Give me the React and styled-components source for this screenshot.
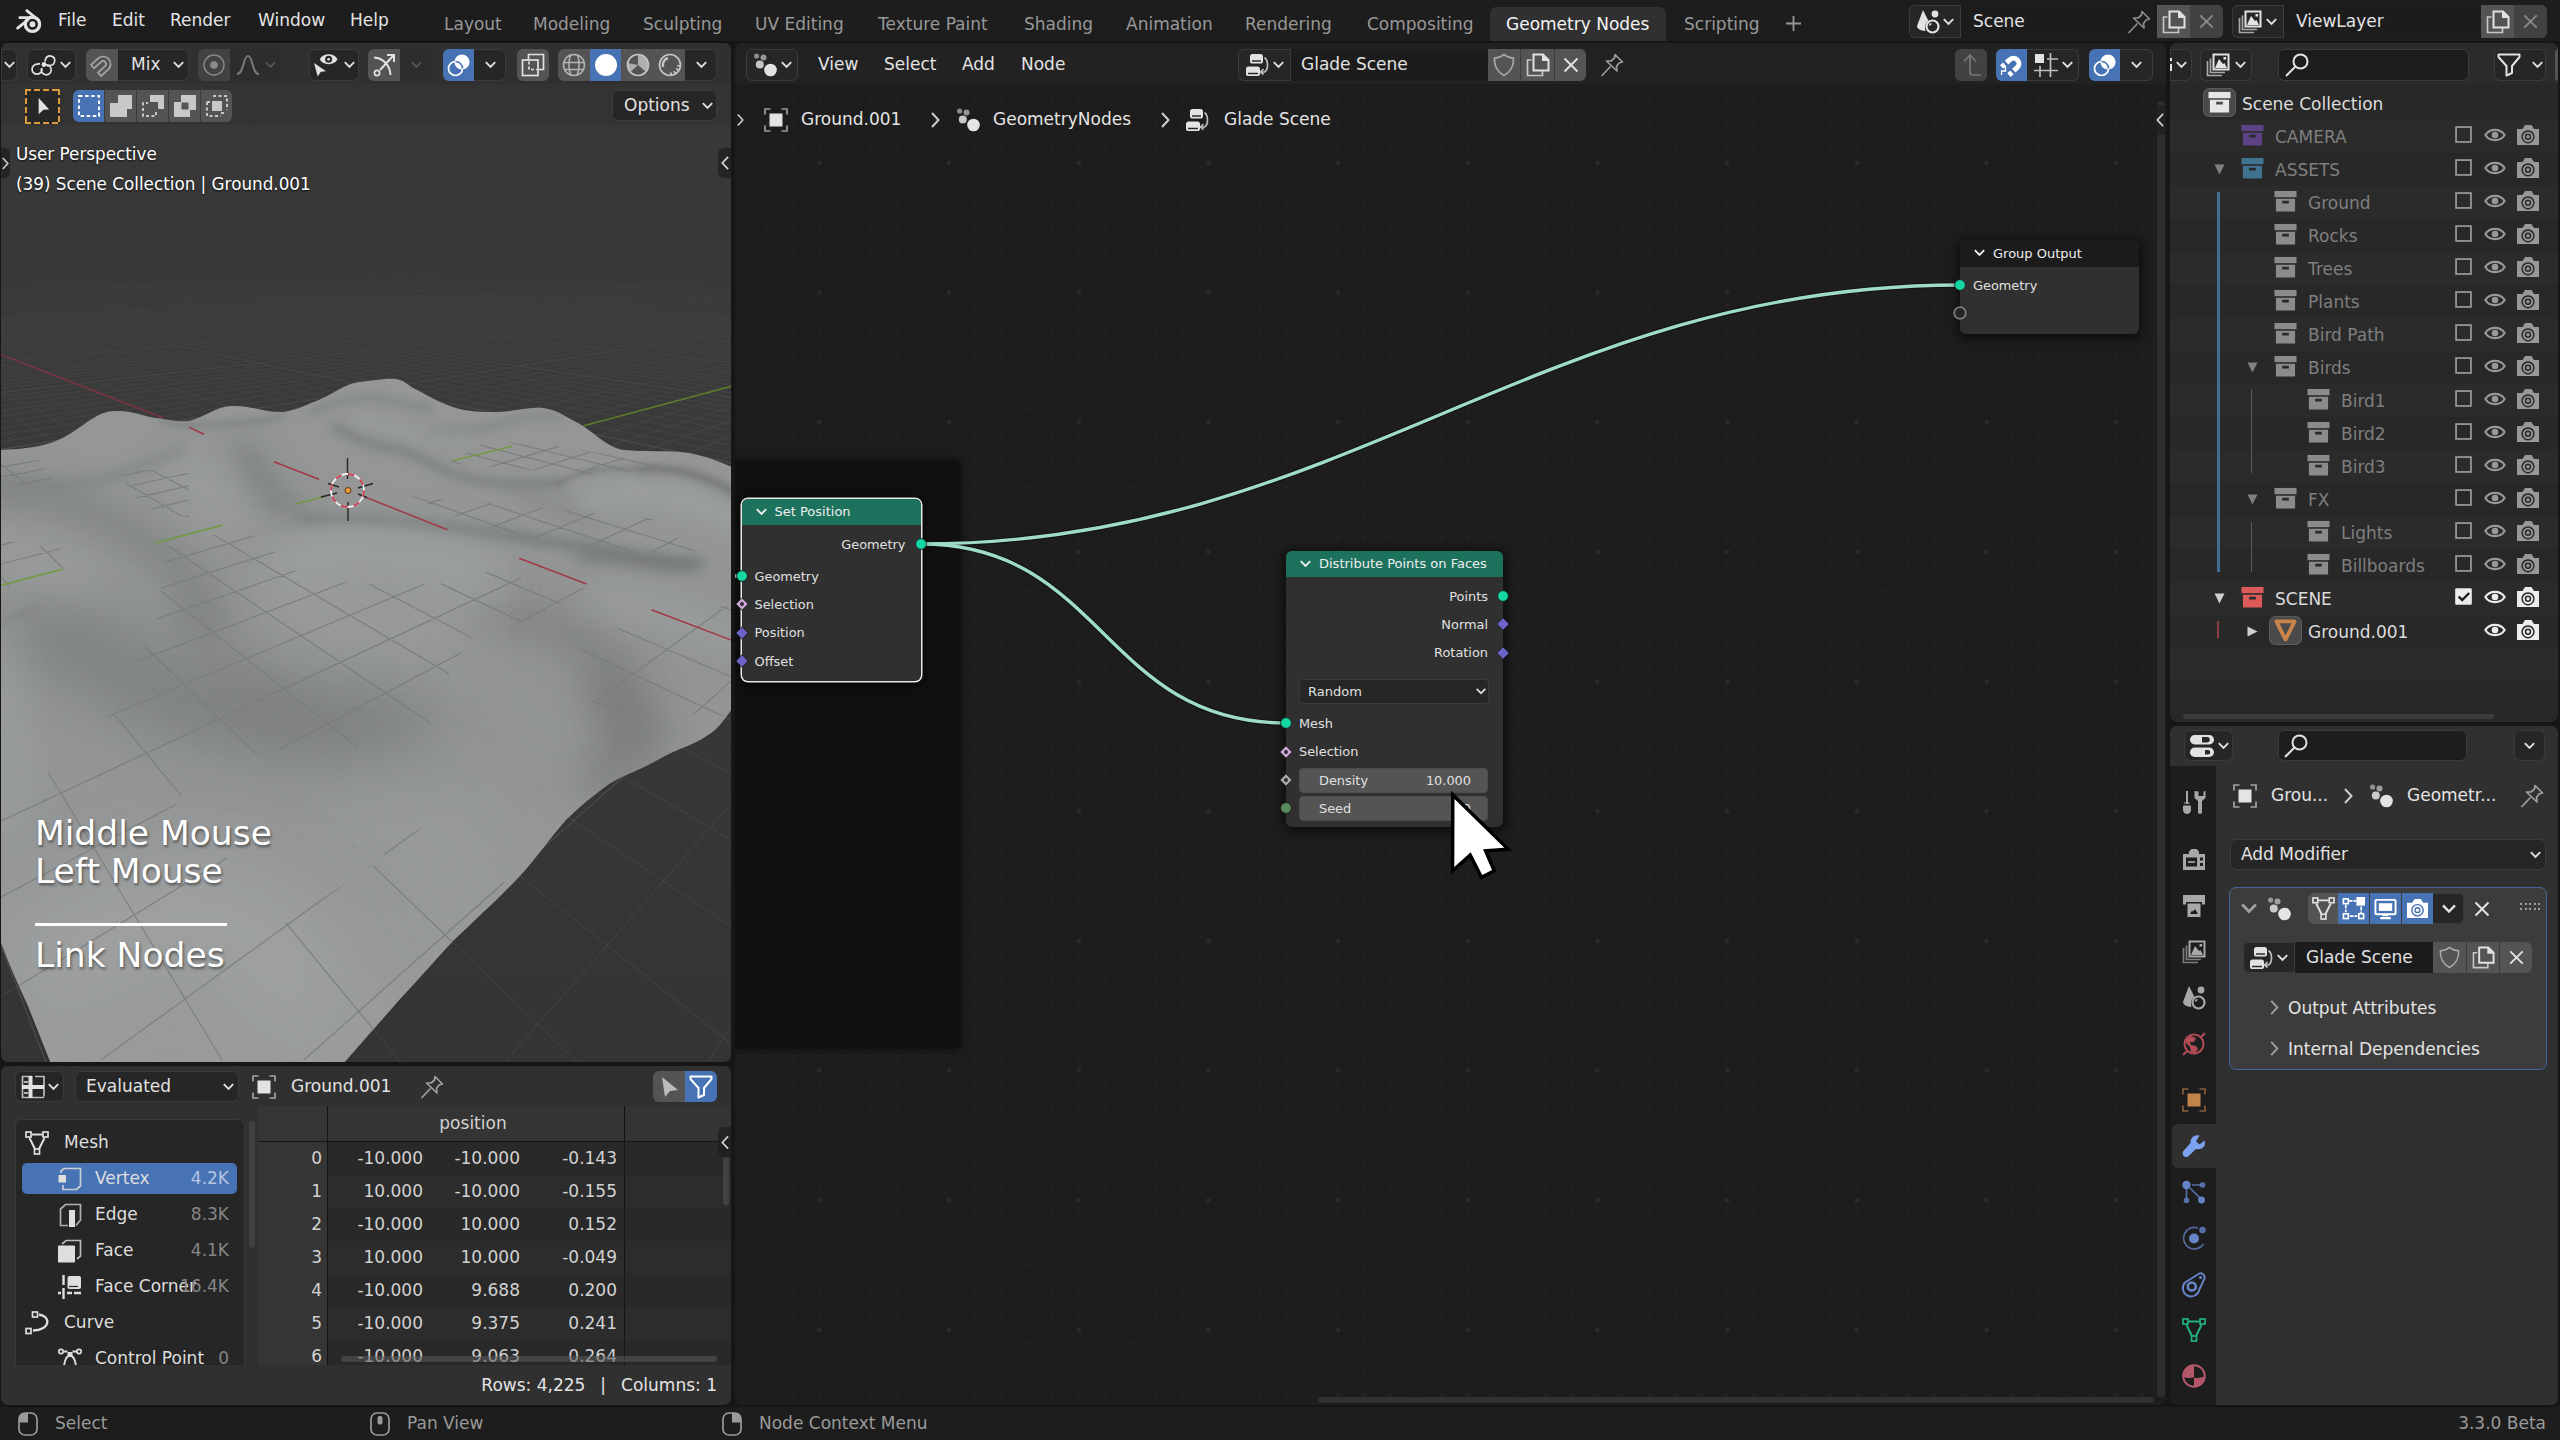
import React from "react";
import styled, { createGlobalStyle, css } from "styled-components";

const Global = createGlobalStyle`
  html, body { margin: 0; padding: 0; background: #161616; overflow: hidden; }
  * { box-sizing: border-box; }
  body { font-family: "DejaVu Sans", sans-serif; font-size: 17px; color: #e4e4e4; }
`;

/* ---------- icons ---------- */
const S = { fill: "none", stroke: "currentColor", strokeWidth: 1.7 };
const F = { fill: "currentColor" };
const sq = (x, y, s = 5) => <rect x={x} y={y} width={s} height={s} {...S} />;

const ICONS = {
  logo: (
    <g>
      <circle cx="15.2" cy="15" r="6.6" {...S} strokeWidth="3" />
      <circle cx="15.2" cy="15" r="2.7" {...F} />
      <path d="M1.5 18.5 L11 11 M3.5 8.8 H15 M10 2.5 L21 11.5" {...S} strokeWidth="2.6" strokeLinecap="round" />
    </g>
  ),
  link: (
    <g>
      <path d="M10.6 13.4a5 5 0 1 1-1 1.6M10 15.5A5 5 0 1 1 5.4 11.2L8 10.6" {...S} />
      <path d="M13 8.5 13.6 6A4.7 4.7 0 1 1 18 12.4L15 13" {...S} />
      <circle cx="12" cy="11.5" r="2.4" {...F} />
    </g>
  ),
  magnet: (
    <g transform="rotate(48 12 12)">
      <path d="M4.5 20V10.5a7.5 7.5 0 0 1 15 0V20h-4.6V10.5a2.9 2.9 0 0 0-5.8 0V20z" {...S} />
    </g>
  ),
  magnetOn: (
    <g>
      <path transform="rotate(48 12 12)" d="M6.6 14.5V10a5.4 5.4 0 0 1 10.8 0V14.5M6.6 17v4M17.4 17v4" {...S} strokeWidth="5" />
      <path d="M1.5 22v-4h4v-4" {...S} strokeWidth="1.3" />
    </g>
  ),
  prop: (
    <g>
      <circle cx="12" cy="12" r="10" {...S} strokeWidth="1.4" />
      <circle cx="12" cy="12" r="3.8" {...F} />
    </g>
  ),
  curve: <path d="M1 21C8 21 7 3 12 3s4 18 11 18" {...S} strokeWidth="2" />,
  vis: (
    <g>
      <path d="M6.5 6C9.5-.3 20.500-.3 23.500 6 20.500 12.300 9.500 12.300 6.500 6z" {...F} />
      <circle cx="15" cy="6" r="3.4" fill="#282828" />
      <circle cx="15" cy="6" r="1.3" {...F} />
      <path d="M1 9.500 12.500 17.500 7.500 18 4.500 22.500z" {...F} />
    </g>
  ),
  gizmo: (
    <g>
      <path d="M2 4.500C11 5 18 12 18.500 22M8 17 21 3M15 2h7v7" {...S} strokeWidth="2" />
      <circle cx="5" cy="20" r="2.6" {...S} />
    </g>
  ),
  overlay: (
    <g>
      <circle cx="15" cy="9" r="7.600" {...F} />
      <circle cx="8.500" cy="15.500" r="7" {...S} />
      <path d="M8.500 8.500a7 7 0 0 1 7 7" fill="none" stroke="#4772b3" strokeWidth="1.600" />
    </g>
  ),
  xray: (
    <g>
      <path d="M7.500 7V1.500h15v15H17" {...S} />
      <rect x="1.500" y="7" width="15.500" height="15.500" {...S} />
      <path d="M8 8.500v8h8" {...S} strokeDasharray="3 2" />
    </g>
  ),
  wire: (
    <g {...S} strokeWidth="1.500">
      <circle cx="12" cy="12" r="10.500" />
      <path d="M1.500 9.500h21M2.500 16.500h19M8.500 2C6.500 8 6.500 16 9 22.500M15.500 2C17.500 8 17.500 16 15 22.500" />
    </g>
  ),
  solid: <circle cx="12" cy="12" r="11" {...F} />,
  matprev: (
    <g>
      <circle cx="12" cy="12" r="10.500" {...S} />
      <path d="M12 1.500V12L20 19A10.500 10.500 0 0 0 12 1.500zM12 12 1.500 10a10.500 10.500 0 0 0 3 9z" {...F} opacity=".8" />
    </g>
  ),
  rendered: (
    <g>
      <circle cx="12" cy="12" r="10.500" {...S} />
      <path d="M5 14a7.500 7.500 0 0 1 5-9" {...S} strokeWidth="2.500" />
      <path d="M12 21a9 9 0 0 0 8.500-9" {...S} strokeWidth="3" strokeDasharray="2 2" />
    </g>
  ),
  arrow: <path d="M5 2 21 15 13 16 8 22z" {...F} />,
  selTool: <path d="M8 3 19 15 13 15.500 8 20z" {...F} />,
  selNew: <rect x="2" y="2" width="20" height="20" {...S} strokeWidth="2" strokeDasharray="3.500 2.600" />,
  selAdd: <path d="M9 1h14v14h-5v8H1V9h8z" {...F} />,
  selSub: (
    <g>
      <path d="M9 1h14v14h-6V8H9z" {...F} />
      <path d="M15 18v4H2V9h5" {...S} strokeWidth="2" strokeDasharray="3 2.500" />
    </g>
  ),
  selInv: <path fillRule="evenodd" d="M8 1h15v15h-6v7H1V8h7zM8.500 8.500v7h7v-7z" {...F} />,
  selInt: (
    <g>
      <rect x="7" y="7" width="10" height="10" {...F} />
      <path d="M8 2h14v14M2 8v14h14M2 8h3M19 19h-3" {...S} strokeWidth="2" strokeDasharray="3 2.500" />
    </g>
  ),
  geo: (
    <g>
      <circle cx="3.600" cy="3" r="2.600" {...F} opacity=".55" />
      <circle cx="10.500" cy="4.600" r="3" {...F} opacity=".6" />
      <circle cx="6.800" cy="11.500" r="4" {...F} opacity=".85" />
      <circle cx="17.500" cy="17" r="6.300" {...F} />
    </g>
  ),
  tree: (
    <g>
      <rect x="5" y="1" width="13" height="9.500" rx="2.600" {...F} />
      <rect x="1" y="13.500" width="14" height="9.500" rx="2.600" {...F} />
      <path d="M7 8h9M3 20.500h10" stroke="#2a2a2a" strokeWidth="1.300" />
      <path d="M19.500 4.500c4 3 4 12 0 14.500h-3M18.500 16l-3 3 3 2.500" {...S} opacity=".8" />
    </g>
  ),
  object: (
    <g>
      <rect x="5.500" y="5.500" width="13" height="13" {...F} />
      <path d="M1 6.500V1h5.500M17.500 1H23v5.500M23 17.500V23h-5.500M6.500 23H1v-5.500" {...S} opacity=".65" />
    </g>
  ),
  scene: (
    <g>
      <path d="M7 0 12.500 11C9 13 8.500 17 9.500 21L6 20.500C3 20 1 18 1 16z" {...F} />
      <circle cx="19" cy="4" r="3.400" {...F} />
      <circle cx="16.500" cy="16.500" r="6" {...S} strokeWidth="2.200" />
      <path d="M13.500 15.500a3 3 0 0 1 2-2" {...S} />
    </g>
  ),
  layers: (
    <g>
      <path d="M1.500 8v14.500H16M4.500 5.500v14H19" {...S} opacity=".7" />
      <rect x="7.500" y="1.500" width="15" height="15" {...S} strokeWidth="2" />
      <path d="M9 15 13 6l4 5 1.500-1L21 15z" {...F} />
      <rect x="17.500" y="4" width="2.600" height="2.600" {...F} />
    </g>
  ),
  pin: (
    <g {...S} strokeLinejoin="round">
      <path d="M15 1.500 22.500 9 19 10 16.500 13.500 17 18 6.500 8 11 8 14.500 5z" />
      <path d="M10.500 13.500 1.500 23" />
    </g>
  ),
  shield: <path d="M12 1.500C15 4 18.500 5 21.500 5 22 13 18 19.500 12 22.500 6 19.500 2 13 2.500 5 5.500 5 9 4 12 1.500z" {...S} />,
  copy: (
    <g>
      <path d="M5.500 7H1.500v15.500h15V18" {...S} opacity=".8" />
      <path d="M7.500 1.500H17l5.500 5.500v10.500h-15z" {...S} strokeWidth="2" />
      <path d="M16 1v7h7z" {...F} />
    </g>
  ),
  close: <path d="M5.500 5.500 18.500 18.500M18.500 5.500 5.500 18.500" {...S} strokeWidth="1.900" />,
  up: <path d="M22 22H14a3 3 0 0 1-3-3V2M5 8.500 11 2l6 6.500" {...S} />,
  snapGrid: (
    <g>
      <rect x="1" y="1" width="9" height="9" {...F} />
      <path d="M16.500 0v24M0 17.500h24M6 13v11M13 6h11" {...S} opacity=".8" />
    </g>
  ),
  search: (
    <g {...S} strokeWidth="2">
      <circle cx="15.500" cy="8.500" r="7" />
      <path d="M10.500 13.500 1 23" />
    </g>
  ),
  funnel: <path d="M1.500 1.500h21v2.500L15 13v7l-5.500 2.500V13L1.500 4z" {...S} strokeWidth="2" strokeLinejoin="round" />,
  coll: (
    <g>
      <rect x=".5" y="1" width="23" height="6.500" {...F} />
      <path fillRule="evenodd" d="M2 9h20v13.500H2zM8.500 11.200v2.800h7v-2.800z" {...F} />
    </g>
  ),
  eye: (
    <g>
      <path d="M1.500 12C6 4.500 18 4.500 22.500 12 18 19.500 6 19.500 1.500 12z" {...S} strokeWidth="2.400" />
      <circle cx="12" cy="12" r="3.600" {...F} />
    </g>
  ),
  camera: (
    <g>
      <path fillRule="evenodd" d="M1 6h5.500L9 2h6.500L18 6h5v16H1zM12 7.200a6.600 6.600 0 1 0 .01 0z" {...F} />
      <circle cx="12" cy="13.800" r="4.200" {...S} strokeWidth="1.900" />
      <circle cx="12" cy="13.800" r="1.700" {...F} />
    </g>
  ),
  box: <rect x="3.500" y="3.500" width="17" height="17" {...S} strokeWidth="2" />,
  boxOn: (
    <g>
      <rect x="2.500" y="2.500" width="19" height="19" rx="1.500" {...F} />
      <path d="M6.500 12 10.500 16 18.500 8" fill="none" stroke="#1c1c1c" strokeWidth="2.800" />
    </g>
  ),
  meshObj: <path d="M2.500 2.500h19L12 21.500z" {...S} strokeWidth="4" strokeLinejoin="round" />,
  props: (
    <g>
      <rect x="0" y="1" width="24" height="9.500" rx="4.700" {...F} />
      <rect x="0" y="13.500" width="24" height="9.500" rx="4.700" {...F} />
      <path d="M12 3h5a2.700 2.700 0 0 1 0 5.500h-5zM15 16h3a2 2 0 0 1 0 4.500h-3z" fill="#282828" />
    </g>
  ),
  tools: (
    <g>
      <path d="M5 1v13" {...S} strokeWidth="2" />
      <path d="M2 13h6M1.500 16h7v4a3.500 3.500 0 0 1-7 0z" {...F} stroke="currentColor" />
      <path d="M12.500 1v7l3.500 3v11a1.500 1.500 0 0 0 4 0V11l3.500-3V1l-2 .5V6h-5V1.500z" {...F} />
    </g>
  ),
  render: (
    <g>
      <path fillRule="evenodd" d="M1 6h6V3.500l2.500-2.500h5l2.500 2.500V6h6v16H1zM4 9.500v9h11v-9z" {...F} />
      <path d="M18 9.500h3v3h-3zM18 15h3v3h-3z" fill="#1d1d1d" />
      <path d="M6 14h7" {...S} />
    </g>
  ),
  output: (
    <g>
      <path d="M1 1h22v9.500h-3V8H4v2.500H1z" {...F} />
      <path fillRule="evenodd" d="M5.500 9.500h13v13.500h-13zM8 20h8l-3-5-2 2.500-1-1z" {...F} />
    </g>
  ),
  world: (
    <g>
      <circle cx="12" cy="12" r="9.500" {...S} strokeWidth="2" />
      <path d="M4 7 9 4l5 2-2 4H8l1 3 5 1 2 3-3 4-4-1-1-5-4-4z" {...F} />
      <path d="M1 23 5 19M19 5l4-4" {...S} strokeWidth="2" />
    </g>
  ),
  wrench: <path d="M22.500 6.500 17.500 10.500 14 7.500 17.500 1.500C13 0 8 3.500 8.500 9L1 17.500C-.5 20.500 2.500 24.500 6 22.500L14 15C20 16.500 24.500 12 22.500 6.500z" {...F} />,
  particles: (
    <g>
      <path d="M10 5h9M4.500 9v10M8 8l11 11" {...S} opacity=".8" />
      <circle cx="4.500" cy="5" r="4.200" {...F} />
      <circle cx="20.500" cy="5" r="2.800" {...F} opacity=".8" />
      <circle cx="4.500" cy="20.500" r="2.800" {...F} opacity=".8" />
      <circle cx="19.500" cy="20" r="3.400" {...F} />
    </g>
  ),
  physics: (
    <g>
      <path d="M16 2A10.800 10.800 0 1 0 21.500 18" {...S} opacity=".75" />
      <circle cx="12" cy="12.500" r="5" {...F} />
      <circle cx="20.500" cy="4" r="3.300" {...F} opacity=".8" />
    </g>
  ),
  constraint: (
    <g>
      <path d="M3 10.500 16.500 2a4 4 0 0 1 5.500 5.500L17.300 17.500A8.300 8.300 0 1 1 3 10.500z" {...S} strokeWidth="1.900" />
      <circle cx="9.800" cy="14.500" r="4" {...S} strokeWidth="2.600" />
      <circle cx="18.500" cy="5.500" r="1.500" {...F} />
    </g>
  ),
  mesh: (
    <g>
      {sq(1, 1)}
      {sq(18, 1)}
      {sq(9.5, 18)}
      <path d="M6.500 3.500H17.500M4.500 7 10 18M19.500 7 14 18" {...S} strokeWidth="2" />
    </g>
  ),
  material: (
    <g>
      <circle cx="12" cy="12" r="10.800" {...S} strokeWidth="2" />
      <path d="M12 1.500V13.500C8 14 5 14.500 1.500 13 1 7 5.500 1.500 12 1.500zM12 14C16 14 19 13.500 22.500 12.500 22 18 18 22.500 12 22.500z" {...F} />
    </g>
  ),
  edit: (
    <g>
      <path d="M7 4h8M4 8v8M20 10v7M8 20h8" {...S} strokeDasharray="4 1" />
      {sq(1.5, 2)}
      {sq(1.5, 17.5)}
      {sq(17.5, 17.5)}
      <rect x="15" y="0" width="9" height="9" {...F} />
    </g>
  ),
  monitor: (
    <g>
      <rect x="1.500" y="3" width="21" height="15" rx="1" {...S} strokeWidth="2" />
      <rect x="5" y="6.500" width="14" height="8" {...F} />
      <path d="M9 19h6M6.500 22h11" {...S} strokeWidth="2.200" />
    </g>
  ),
  sheet: (
    <g>
      <path d="M1 1.500h10M1 22.500h22M14 1.500h9v20M1.500 1v22" {...S} opacity=".8" />
      <path d="M9.500 1v22M1 12h22" {...S} strokeWidth="4" />
      <path d="M3 7h4M3 18h4" {...S} />
    </g>
  ),
  vertex: (
    <g>
      <path d="M3 6V4l3-2.500h16.500V19L18.500 22.500H5V18" {...S} opacity=".85" />
      <rect x=".5" y="8" width="7.500" height="7.500" {...F} />
    </g>
  ),
  edge: (
    <g>
      <path d="M10 22.500H2.500V6L7.500 1.500h15V17L18 22.500" {...S} opacity=".75" />
      <rect x="11" y="7" width="6" height="17" {...F} />
    </g>
  ),
  face: (
    <g>
      <path d="M4 5 8 1.500h14.500V17L19 20" {...S} opacity=".8" />
      <rect x="0" y="6.500" width="17" height="17" rx="1" {...F} />
    </g>
  ),
  corner: (
    <g>
      <path d="M5.500 0v10M0 18h3M5.500 13v11M9 18h5M16 18h7" {...S} strokeWidth="2.400" />
      <rect x="9.500" y="1" width="13.500" height="13" rx="2" {...F} />
      <path d="M11 11.500h9" stroke="#262626" strokeWidth="1.200" />
    </g>
  ),
  bezier: (
    <g>
      {sq(7.500, 1)}
      {sq(1, 17.500)}
      <path d="M14 3.500C26 5 26 19 8 19.500" {...S} strokeWidth="2.300" />
    </g>
  ),
  ctrl: (
    <g>
      <path d="M5.500 4.500h4M14.500 4.500h4M6 22C6 4 18 4 18 22" {...S} strokeWidth="2" />
      <circle cx="3" cy="4.500" r="2.200" {...S} />
      <circle cx="21" cy="4.500" r="2.200" {...S} />
      <rect x="9.500" y="5" width="5" height="5" {...F} />
    </g>
  ),
  mouseL: (
    <g>
      <rect x="3" y="1" width="18" height="22" rx="6" {...S} />
      <path d="M3 10.500V6A5 5 0 0 1 8 1h4v9.500z" {...F} />
    </g>
  ),
  mouseM: (
    <g>
      <rect x="3" y="1" width="18" height="22" rx="6" {...S} />
      <rect x="9.500" y="4" width="5" height="8.500" rx="2" {...F} />
    </g>
  ),
  mouseR: (
    <g>
      <rect x="3" y="1" width="18" height="22" rx="6" {...S} />
      <path d="M21 10.500V6a5 5 0 0 0-5-5h-4v9.500z" {...F} />
    </g>
  ),
};

const Svg = styled.svg`
  display: block;
  flex: none;
  overflow: visible;
  color: ${(p) => p.$c || "inherit"};
  margin-left: ${(p) => p.$ml || 0}px;
`;
const Icon = ({ n, s = 24, c, ml }) => (
  <Svg width={s} height={s} viewBox="0 0 24 24" $c={c} $ml={ml}>
    {ICONS[n]}
  </Svg>
);
const Chev = ({ w = 11, c, ml }) => (
  <Svg width={w} height={w * 0.65} viewBox="0 0 11 7" $c={c} $ml={ml}>
    <path d="M.8 1 5.500 5.800 10.200 1" fill="none" stroke="currentColor" strokeWidth="1.900" />
  </Svg>
);
const Caret = ({ c = "#d0d0d0", w = 9, h = 16, ml, left }) => (
  <Svg width={w} height={h} viewBox="0 0 9 16" $c={c} $ml={ml}>
    <path d={left ? "M8 1 1.500 8 8 15" : "M1 1 7.500 8 1 15"} fill="none" stroke="currentColor" strokeWidth="2" />
  </Svg>
);

/* ---------- shared parts ---------- */
const Page = styled.div`
  width: 2560px;
  height: 1440px;
  display: flex;
  flex-direction: column;
  background: #161616;
  white-space: nowrap;
  overflow: hidden;
`;
const Row = styled.div`
  display: flex;
  align-items: center;
`;
const Spacer = styled.div`
  height: ${(p) => p.$h}px;
`;
const Group = styled.div`
  display: flex;
  flex: none;
  width: fit-content;
  height: ${(p) => p.$h || 32}px;
  margin-left: ${(p) => p.$ml || 0}px;
  border-radius: ${(p) => (p.$flat ? "0 6px 6px 0" : "6px")};
  overflow: hidden;
  position: relative;
  background: ${(p) => p.$bg || "#262626"};
  box-shadow: inset 0 0 0 1px #3b3b3b;
`;
const Cell = styled.div`
  width: ${(p) => p.$w}px;
  height: 100%;
  display: flex;
  align-items: center;
  flex: none;
  justify-content: ${(p) => (p.$left ? "flex-start" : "center")};
  padding-left: ${(p) => p.$pl || 0}px;
  gap: ${(p) => p.$gap || 0}px;
  color: ${(p) => p.$c || "#e2e2e2"};
  ${(p) => p.$t === "on" && css`background: #4772b3; color: #fff;`}
  ${(p) => p.$t === "grey" && css`background: #545454;`}
  ${(p) => p.$t === "mid" && css`background: #424242;`}
  ${(p) => p.$t === "field" && css`background: #1c1c1c;`}
  ${(p) => p.$t === "dim" && css`background: #2d2d2d; color: #555;`}
  ${(p) => p.$sep && css`border-left: 1px solid #3c3c3c;`}
`;
const Text = styled.span`
  width: ${(p) => (p.$w ? p.$w + "px" : "auto")};
  margin-left: ${(p) => p.$ml || 0}px;
  margin-top: -2px;
  color: ${(p) => p.$c || "inherit"};
  flex: none;
  line-height: 20px;
`;
const Edge = styled.div`
  position: absolute;
  ${(p) => p.$side}: 0;
  top: ${(p) => p.$y}px;
  width: ${(p) => p.$w || 13}px;
  height: 30px;
  border-radius: ${(p) => (p.$side === "right" ? "6px 0 0 6px" : "0 6px 6px 0")};
  background: rgba(30, 30, 30, 0.75);
  display: flex;
  align-items: center;
  justify-content: center;
`;

/* ---------- top bar ---------- */
const TopBar = styled.header`
  height: 43px;
  flex: none;
  display: flex;
  background: #1d1d1d;
  border-bottom: 2px solid #151515;
`;
const Menus = styled.nav`
  display: flex;
  align-items: center;
  width: 428px;
  height: 42px;
  padding-left: 16px;
`;
const Tabs = styled.nav`
  display: flex;
  align-items: flex-end;
  gap: 2px;
  width: 1480px;
`;
const Tab = styled.div`
  width: ${(p) => p.$w}px;
  height: 34px;
  display: flex;
  align-items: center;
  padding-left: 16px;
  padding-bottom: 1px;
  border-radius: 6px 6px 0 0;
  color: ${(p) => (p.$on ? "#f4f4f4" : "#989898")};
  background: ${(p) => (p.$on ? "#303030" : "transparent")};
`;
const TopData = styled.div`
  display: flex;
  padding-top: 5px;
`;

const TABS = [
  ["Layout", 87], ["Modeling", 108], ["Sculpting", 110], ["UV Editing", 121], ["Texture Paint", 144],
  ["Shading", 100], ["Animation", 117], ["Rendering", 120], ["Compositing", 137], ["Geometry Nodes", 176, true], ["Scripting", 100],
];

const Top = () => (
  <TopBar>
    <Menus>
      <Icon n="logo" s={26} />
      <Text $ml={16} $w={54}>File</Text>
      <Text $w={58}>Edit</Text>
      <Text $w={88}>Render</Text>
      <Text $w={92}>Window</Text>
      <Text>Help</Text>
    </Menus>
    <Tabs>
      {TABS.map(([t, w, on]) => (
        <Tab key={t} $w={w} $on={on}>{t}</Tab>
      ))}
      <Tab $w={40}>
        <Svg width="15" height="15" viewBox="0 0 15 15"><path d="M7.500 0v15M0 7.500h15" stroke="currentColor" strokeWidth="1.800" /></Svg>
      </Tab>
    </Tabs>
    <TopData>
      <Group $h={33} $ml={1}>
        <Cell $w={51} $gap={3}><Icon n="scene" /><Chev /></Cell>
        <Cell $w={197} $left $pl={12} $t="field" $sep>
          <Text $w={154}>Scene</Text><Icon n="pin" c="#8a8a8a" />
        </Cell>
        <Cell $w={33} $t="grey"><Icon n="copy" /></Cell>
        <Cell $w={33} $t="mid" $c="#8a8a8a"><Icon n="close" s={23} /></Cell>
      </Group>
      <Group $h={33} $ml={9}>
        <Cell $w={51} $gap={4}><Icon n="layers" /><Chev /></Cell>
        <Cell $w={198} $left $pl={12} $t="field" $sep><Text>ViewLayer</Text></Cell>
        <Cell $w={33} $t="grey"><Icon n="copy" /></Cell>
        <Cell $w={33} $t="mid" $c="#8a8a8a"><Icon n="close" s={23} /></Cell>
      </Group>
    </TopData>
  </TopBar>
);

/* ---------- 3D scene drawing ---------- */
const O = [347, 491];
const VX = [-266, 252];
const VY = [1211, 255];
const wOf = (u, v) => 1 + u * 0.0404 + v * 0.0353;
const project = (u, v) => {
  const a = u * 0.0404;
  const b = v * 0.0353;
  const w = 1 + a + b;
  return [(O[0] + a * VX[0] + b * VY[0]) / w, (O[1] + a * VX[1] + b * VY[1]) / w];
};
const gridLine = (fix, alongU) => {
  const pts = [];
  for (let t = -60; t <= 120; t += 1) {
    const [u, v] = alongU ? [t, fix] : [fix, t];
    if (wOf(u, v) > 0.25) {
      const [x, y] = project(u, v);
      pts.push(x.toFixed(1) + " " + y.toFixed(1));
    }
  }
  return pts.length > 1 ? "M" + pts[0] + "L" + pts[pts.length - 1] : "";
};
const range = (a, b, s = 1) => Array.from({ length: Math.floor((b - a) / s) + 1 }, (_, i) => a + i * s);
const FINE = range(-22, 60).filter((i) => i !== 0).map((i) => gridLine(i, true) + gridLine(i, false)).join("");
const MAJOR = range(-20, 120, 10).filter((i) => i !== 0).map((i) => gridLine(i, true) + gridLine(i, false)).join("");

const TERRAIN =
  "M0 450C20 449 34 448 47 444C75 437 92 412 113 411C132 410 142 416 156 418C170 420 180 422 189 421C206 417 214 407 231 406C252 405 264 413 283 412C296 410 302 407 311 403C330 397 343 384 359 382C374 381 384 378 396 379C406 381 407 385 415 389C427 395 440 403 453 407C468 412 482 412 495 412C512 412 528 407 543 408C558 410 566 417 576 422C592 430 606 447 623 450C645 452 668 450 689 453C706 456 720 462 732 467V709C724 720 717 730 708 735C700 741 690 745 680 749C667 754 655 762 642 768C631 773 620 777 609 784C595 794 580 806 566 820C550 838 535 860 519 877C498 899 475 920 453 941C435 960 418 980 401 998L343 1064H51L28 1006C18 984 8 962 0 940Z";

/* path, colour, width, blur, opacity */
const SHADE = [
  ["M40 632C80 640 120 670 160 692S300 722 400 728", "#727475", 60, 32, 0.72],
  ["M200 612C216 660 240 700 300 720", "#7a7c7d", 44, 24, 0.5],
  ["M-10 490C50 494 100 510 150 545S190 590 205 620", "#77797a", 30, 16, 0.62],
  ["M244 452C262 470 262 490 292 512", "#77797a", 26, 13, 0.65],
  ["M300 519C350 518 400 521 440 526S540 540 600 550S670 562 700 563", "#6c6f70", 8, 6, 0.85],
  ["M580 556C620 560 650 566 690 568", "#67696a", 8, 7, 0.7],
  ["M480 622C520 618 560 622 585 640S622 690 640 740", "#7a7c7d", 34, 19, 0.7],
  ["M600 690C640 710 650 740 600 780", "#747677", 42, 22, 0.7],
  ["M335 426C352 438 368 445 401 450C432 462 444 474 480 481C510 486 540 485 560 483", "#77797a", 8, 5, 0.75],
  ["M556 484C575 474 590 470 612 469C650 468 690 466 732 492", "#747677", 4, 2.500, 0.7],
  ["M640 470C680 466 710 478 732 492", "#6f7172", 7, 4, 0.7],
  ["M310 412C335 402 350 398 375 397C395 402 410 406 430 408", "#7c7e7f", 6, 4, 0.7],
  ["M430 432C460 434 480 430 500 424S530 414 560 416", "#7f8182", 8, 5, 0.6],
  ["M160 420C180 427 240 428 282 416", "#777979", 5, 3.500, 0.75],
  ["M0 486C30 480 50 488 75 485S160 462 182 448", "#7c7e7f", 9, 6, 0.6],
  ["M0 622C16 618 28 612 40 606", "#7a7c7d", 4, 3, 0.6],
  ["M520 488C540 500 560 512 590 520", "#7a7c7d", 14, 9, 0.45],
  ["M185 475C205 475 215 490 225 512", "#a4a6a6", 30, 18, 0.55],
  ["M290 562C340 545 410 550 480 575", "#a3a5a5", 44, 20, 0.7],
  ["M290 600C340 630 420 640 470 620", "#a0a2a2", 50, 26, 0.55],
  ["M360 420C380 425 420 440 470 440", "#9fa1a1", 10, 6, 0.5],
  ["M590 500C640 485 700 500 732 520", "#a2a4a4", 22, 10, 0.7],
  ["M600 600C650 610 700 620 732 640", "#a0a2a2", 30, 16, 0.6],
  ["M0 560C30 560 60 570 80 580", "#a0a2a2", 34, 18, 0.6],
  ["M-10 650C6 690 12 740 4 820", "#a2a4a4", 34, 20, 0.6],
  ["M60 960C160 880 260 900 300 990", "#a4a6a6", 90, 40, 0.7],
  ["M480 670C520 670 550 690 560 730", "#96989a", 40, 22, 0.5],
  ["M370 810C450 790 480 860 440 900", "#9c9e9e", 70, 30, 0.5],
];

const zp = (x, y) => [(x / 2.119).toFixed(1), (y / 1.823 + 200).toFixed(1)].join(" ");
const poly = (list) => "M" + list.map(([x, y]) => zp(x, y)).join("L") + "Z";
const POCKETS = [
  [[360, 610], [545, 612], [630, 680], [745, 698], [905, 706], [1000, 800], [960, 845], [910, 957], [750, 997], [610, 1000], [540, 1012], [380, 1088], [370, 1110], [0, 1280], [0, 1130], [205, 955], [240, 935], [295, 840], [330, 768]],
  [[0, 1260], [85, 1025], [220, 1200], [370, 1110], [500, 1215], [600, 1320], [920, 1140], [745, 1180], [1100, 1250], [1000, 1390], [735, 1568], [100, 1568], [0, 1350]],
  [[775, 700], [930, 700], [1030, 678], [1250, 710], [1120, 765], [1000, 800]],
  [[1380, 745], [1549, 740], [1549, 930], [1530, 940], [1260, 930], [1230, 820]],
  [[870, 540], [1380, 580], [1480, 640], [1280, 645], [1180, 625], [1000, 590]],
  [[1030, 440], [1200, 450], [1440, 490], [1250, 500], [950, 480]],
  [[250, 495], [400, 490], [400, 580], [300, 560]],
  [[0, 480], [80, 470], [120, 520], [0, 520]],
  [[0, 620], [130, 635], [135, 675], [0, 710]],
].map(poly).join("");
const seg = (list) => list.map(([a, b, c, d]) => "M" + zp(a, b) + "L" + zp(c, d)).join("");
const RED = seg([[400, 414, 432, 427], [580, 477, 676, 509], [775, 542, 948, 601], [1100, 653, 1243, 700], [1380, 747, 1552, 803]]);
const GREEN = seg([[960, 475, 1085, 449], [625, 554, 690, 540], [330, 625, 472, 593], [0, 703, 133, 673]]);

const SceneSvg = styled.svg`
  position: absolute;
  left: 0;
  top: 0;
`;

const Scene3D = () => (
  <SceneSvg width="730" height="1019" viewBox="1 43 730 1019">
    <defs>
      <linearGradient id="sky" x1="0" y1="0" x2="0" y2="1">
        <stop offset="0" stopColor="#373737" />
        <stop offset=".35" stopColor="#3a3a3a" />
        <stop offset="1" stopColor="#343434" />
      </linearGradient>
      <linearGradient id="fade" gradientUnits="userSpaceOnUse" x1="0" y1="255" x2="0" y2="460">
        <stop offset="0" stopColor="#000" />
        <stop offset="1" stopColor="#fff" />
      </linearGradient>
      <linearGradient id="land" x1="0" y1="0" x2="0" y2="1">
        <stop offset="0" stopColor="#959797" />
        <stop offset=".5" stopColor="#929495" />
        <stop offset="1" stopColor="#9a9c9c" />
      </linearGradient>
      <mask id="far" maskUnits="userSpaceOnUse" x="0" y="0" width="740" height="1100">
        <rect width="740" height="1100" fill="url(#fade)" />
      </mask>
      <clipPath id="landClip"><path d={TERRAIN} /></clipPath>
      <clipPath id="pockets"><path d={POCKETS} /></clipPath>
      {SHADE.map((s, i) => (
        <filter key={i} id={"b" + i} filterUnits="userSpaceOnUse" x="-150" y="250" width="1040" height="960">
          <feGaussianBlur stdDeviation={s[3]} />
        </filter>
      ))}
    </defs>
    <rect x="0" y="43" width="732" height="1020" fill="url(#sky)" />
    <g mask="url(#far)" fill="none">
      <path d={FINE} stroke="#4a4a4a" strokeWidth="1" opacity=".75" />
      <path d={MAJOR} stroke="#505050" strokeWidth="1.200" opacity=".7" />
    </g>
    <path d={seg([[0, 281, 345, 397]])} stroke="#7c3440" strokeWidth="1.600" />
    <path d={seg([[1235, 412, 1552, 339]])} stroke="#5d7a2b" strokeWidth="1.800" />
    <path d={TERRAIN} fill="url(#land)" />
    <g clipPath="url(#landClip)" fill="none">
      {SHADE.map((s, i) => (
        <path key={i} d={s[0]} stroke={s[1]} strokeWidth={s[2]} strokeLinecap="round" opacity={s[4]} filter={`url(#b${i})`} />
      ))}
      <g clipPath="url(#pockets)">
        <path d={FINE} stroke="#7a7c7c" strokeWidth="1.200" opacity=".9" />
      </g>
      <path d={RED} stroke="#a03a45" strokeWidth="1.500" />
      <path d={GREEN} stroke="#6f9a3c" strokeWidth="1.400" />
    </g>
    <g fill="none" strokeWidth="1.400">
      <path d="M347.500 458V479M348 502V521M328 483.500 339 487M358 494 367 497.500M321 497 337 493M358 488 373 483.500" stroke="#262626" />
      <circle cx="347.500" cy="490.500" r="16.500" stroke="#f2f2f2" strokeWidth="1.800" />
      <circle cx="347.500" cy="490.500" r="16.500" stroke="#c8384a" strokeWidth="1.800" strokeDasharray="6.480 6.480" />
    </g>
    <circle cx="348" cy="490.500" r="3" fill="#e8973a" stroke="#5a3a12" />
  </SceneSvg>
);

/* ---------- viewport ---------- */
const LeftCol = styled.div`
  width: 731px;
  padding-left: 1px;
  display: flex;
  flex-direction: column;
  gap: 4px;
`;
const Viewport = styled.section`
  position: relative;
  height: 1019px;
  border-radius: 7px;
  overflow: hidden;
`;
const Bar = styled.div`
  position: relative;
  height: ${(p) => p.$h || 41}px;
  display: flex;
  padding-top: ${(p) => (p.$pt === undefined ? 6 : p.$pt)}px;
  padding-bottom: ${(p) => p.$pb || 3}px;
  background: ${(p) => p.$bg};
`;
const ToolBox = styled.div`
  margin-left: 24px;
  margin-top: -1px;
  width: 35px;
  height: 35px;
  display: flex;
  align-items: center;
  justify-content: center;
  background: repeating-linear-gradient(90deg, #dd9a3c 0 6px, transparent 6px 9px) top / 100% 2px no-repeat,
    repeating-linear-gradient(90deg, #dd9a3c 0 6px, transparent 6px 9px) bottom / 100% 2px no-repeat,
    repeating-linear-gradient(#dd9a3c 0 6px, transparent 6px 9px) left / 2px 100% no-repeat,
    repeating-linear-gradient(#dd9a3c 0 6px, transparent 6px 9px) right / 2px 100% no-repeat, #272727;
`;
const Info = styled.div`
  position: relative;
  padding: 14px 0 0 15px;
  color: #fff;
  text-shadow: 0 1px 2px rgba(0, 0, 0, 0.8);
  line-height: 30px;
  font-size: 16.800px;
`;
const Keys = styled.div`
  position: absolute;
  left: 34px;
  bottom: 88px;
  color: #fff;
  font-size: 34.500px;
  line-height: 38.500px;
  text-shadow: 1px 2px 3px rgba(0, 0, 0, 0.5);
`;
const KeysRule = styled.div`
  width: 192px;
  height: 3px;
  background: #fff;
  margin: 32px 0 10px 0;
`;

const ViewportArea = () => (
  <Viewport>
    <Scene3D />
    <Bar $bg="#303030">
      <Group $flat><Cell $w={16}><Chev /></Cell></Group>
      <Group $ml={10}><Cell $w={49} $gap={4}><Icon n="link" /><Chev /></Cell></Group>
      <Group $ml={10}>
        <Cell $w={32} $t="grey" $c="#a5a5a5"><Icon n="magnet" /></Cell>
        <Cell $w={71} $left $pl={13}><Text $w={42}>Mix</Text><Chev /></Cell>
      </Group>
      <Group $ml={9}>
        <Cell $w={32} $t="mid" $c="#8b8b8b"><Icon n="prop" /></Cell>
        <Cell $w={51} $t="dim" $gap={5}><Icon n="curve" c="#777" /><Chev /></Cell>
      </Group>
      <Group $ml={28}><Cell $w={50} $gap={6}><Icon n="vis" s={25} /><Chev /></Cell></Group>
      <Group $ml={9}>
        <Cell $w={32} $t="grey"><Icon n="gizmo" /></Cell>
        <Cell $w={33} $t="dim"><Chev /></Cell>
      </Group>
      <Group $ml={10}>
        <Cell $w={31} $t="on"><Icon n="overlay" /></Cell>
        <Cell $w={32}><Chev /></Cell>
      </Group>
      <Group $ml={11}><Cell $w={32} $t="grey"><Icon n="xray" /></Cell></Group>
      <Group $ml={9}>
        <Cell $w={32} $t="grey" $c="#b5b5b5"><Icon n="wire" /></Cell>
        <Cell $w={31} $t="on"><Icon n="solid" /></Cell>
        <Cell $w={33} $t="grey" $c="#c4c4c4"><Icon n="matprev" /></Cell>
        <Cell $w={31} $t="grey" $c="#c4c4c4"><Icon n="rendered" /></Cell>
        <Cell $w={32}><Chev /></Cell>
      </Group>
    </Bar>
    <Bar $bg="rgba(50,50,50,.85)">
      <ToolBox><Icon n="selTool" s={23} /></ToolBox>
      <Group $ml={13}>
        <Cell $w={31} $t="on"><Icon n="selNew" /></Cell>
        <Cell $w={32} $t="grey" $c="#c8c8c8" $sep><Icon n="selAdd" /></Cell>
        <Cell $w={32} $t="grey" $c="#c8c8c8" $sep><Icon n="selSub" /></Cell>
        <Cell $w={32} $t="grey" $c="#c8c8c8" $sep><Icon n="selInv" /></Cell>
        <Cell $w={32} $t="grey" $c="#c8c8c8" $sep><Icon n="selInt" /></Cell>
      </Group>
      <Group $ml={380} $h={31}>
        <Cell $w={105} $left $pl={12}><Text $w={78}>Options</Text><Chev /></Cell>
      </Group>
    </Bar>
    <Info>
      User Perspective
      <br />
      (39) Scene Collection | Ground.001
    </Info>
    <Edge $side="left" $y={105} $w={9}><Caret h={15} w={7} /></Edge>
    <Edge $side="right" $y={105}><Caret left h={16} w={8} /></Edge>
    <Keys>
      Middle Mouse
      <br />
      Left Mouse
      <KeysRule />
      Link Nodes
    </Keys>
  </Viewport>
);

/* ---------- spreadsheet ---------- */
const Sheet = styled.section`
  position: relative;
  height: 339px;
  border-radius: 7px;
  overflow: hidden;
  background: #303030;
  display: flex;
  flex-direction: column;
`;
const SheetBody = styled.div`
  display: flex;
  height: 259px;
`;
const ListBox = styled.div`
  margin: 13px 0 0 14px;
  width: 230px;
  height: 246px;
  padding: 7px 7px 0 6px;
  background: #262626;
  border: 1px solid #3a3a3a;
  border-bottom: 0;
  border-radius: 6px 6px 0 0;
  overflow: hidden;
`;
const ListItem = styled.div`
  height: 31px;
  margin-bottom: 5px;
  border-radius: 5px;
  display: flex;
  align-items: center;
  padding-left: ${(p) => (p.$sub ? 36 : 3)}px;
  padding-right: 8px;
  gap: ${(p) => (p.$sub ? 13 : 15)}px;
  color: #dedede;
  background: ${(p) => (p.$on ? "#4772b3" : "transparent")};
`;
const Count = styled.span`
  flex: 1;
  width: 0;
  margin-top: -2px;
  display: flex;
  justify-content: flex-end;
  color: ${(p) => (p.$on ? "#b4c6e2" : "#868686")};
`;
const Thumb = styled.div`
  width: ${(p) => p.$w}px;
  height: ${(p) => p.$h}px;
  border-radius: 4px;
  background: ${(p) => p.$bg || "#424242"};
  margin: ${(p) => p.$m || 0};
  flex: none;
`;
const FloatThumb = styled(Thumb)`
  position: absolute;
  left: ${(p) => p.$x}px;
  top: ${(p) => p.$y}px;
`;
const Table = styled.div`
  width: 473px;
  height: 259px;
  overflow: hidden;
`;
const TRow = styled.div`
  display: flex;
  height: ${(p) => (p.$head ? 36 : 33)}px;
  background: ${(p) => (p.$head ? "#343434" : p.$odd ? "#2c2c2c" : "#292929")};
  border-bottom: ${(p) => (p.$head ? "1px solid #161616" : "0")};
  color: #d2d2d2;
`;
const Idx = styled.div`
  width: 70px;
  padding-right: 5px;
  padding-bottom: 2px;
  background: #353535;
  border-right: 1px solid #151515;
  display: flex;
  align-items: center;
  justify-content: flex-end;
`;
const Vals = styled.div`
  width: 297px;
  border-right: 1px solid #151515;
  display: flex;
  align-items: center;
  padding-bottom: 2px;
  padding-right: ${(p) => (p.$mid ? 6 : 0)}px;
  justify-content: ${(p) => (p.$mid ? "center" : "flex-start")};
`;
const Val = styled.div`
  width: 97px;
  text-align: right;
  &:first-child { width: 95px; }
`;
const SheetFoot = styled.div`
  height: 40px;
  display: flex;
  align-items: center;
  justify-content: flex-end;
  padding-right: 14px;
  gap: 15px;
`;

const DOMAINS = [
  ["mesh", "Mesh"], ["vertex", "Vertex", "4.2K", true], ["edge", "Edge", "8.3K"], ["face", "Face", "4.1K"],
  ["corner", "Face Corner", "16.4K"], ["bezier", "Curve"], ["ctrl", "Control Point", "0"],
];
const DATA = [
  ["-10.000", "-10.000", "-0.143"], ["10.000", "-10.000", "-0.155"], ["-10.000", "10.000", "0.152"],
  ["10.000", "10.000", "-0.049"], ["-10.000", "9.688", "0.200"], ["-10.000", "9.375", "0.241"], ["-10.000", "9.063", "0.264"],
];

const Spreadsheet = () => (
  <Sheet>
    <Bar $bg="#303030" $h={40} $pt={5} $pb={4}>
      <Group $ml={14} $h={31}><Cell $w={49} $gap={3}><Icon n="sheet" /><Chev /></Cell></Group>
      <Group $ml={11} $h={31}>
        <Cell $w={164} $left $pl={11}><Text $w={137}>Evaluated</Text><Chev /></Cell>
      </Group>
      <Cell $w={178} $left $pl={13} $gap={15}><Icon n="object" /><Text>Ground.001</Text></Cell>
      <Cell $w={30}><Icon n="pin" c="#a0a0a0" /></Cell>
      <Group $ml={206} $h={31}>
        <Cell $w={32} $t="grey" $c="#bdbdbd"><Icon n="arrow" /></Cell>
        <Cell $w={32} $t="on"><Icon n="funnel" /></Cell>
      </Group>
    </Bar>
    <SheetBody>
      <ListBox>
        {DOMAINS.map(([ic, label, n, on]) => (
          <ListItem key={label} $sub={n !== undefined} $on={on}>
            <Icon n={ic} />
            <Text>{label}</Text>
            {n && <Count $on={on}>{n}</Count>}
          </ListItem>
        ))}
      </ListBox>
      <Thumb $w={6} $h={127} $m="15px 3px 0 4px" $bg="#404040" />
      <Table>
        <TRow $head>
          <Idx />
          <Vals $mid>position</Vals>
        </TRow>
        {DATA.map((r, i) => (
          <TRow key={i} $odd={i % 2}>
            <Idx>{i}</Idx>
            <Vals>{r.map((v, j) => <Val key={j}>{v}</Val>)}</Vals>
          </TRow>
        ))}
      </Table>
    </SheetBody>
    <SheetFoot><span>Rows: 4,225</span><span>|</span><span>Columns: 1</span></SheetFoot>
    <FloatThumb $w={376} $h={6} $x={340} $y={290} $bg="rgba(90,90,90,.55)" />
    <FloatThumb $w={6} $h={48} $x={722} $y={91} />
    <Edge $side="right" $y={61}><Caret left h={15} w={8} /></Edge>
  </Sheet>
);

/* ---------- node editor ---------- */
const NodeEditor = styled.section`
  position: relative;
  margin-left: 4px;
  width: 1431px;
  height: 1362px;
  border-radius: 7px;
  overflow: hidden;
  background: #1d1d1d;
`;
const Canvas = styled.div`
  position: relative;
  height: 1321px;
  overflow: hidden;
  background: radial-gradient(circle, #2b2b2b 0 2px, transparent 2.600px) 19.500px 14px / 129.700px 129.700px,
    radial-gradient(circle, #222 0 1.500px, transparent 2px) 19.500px 1px / 25.940px 25.940px, #1d1d1d;
`;
const Path = styled.div`
  position: absolute;
  left: 29px;
  top: 24px;
  display: flex;
  align-items: center;
`;
const Links = styled.svg`
  position: absolute;
  left: 0;
  top: 0;
`;
const Frame = styled.div`
  position: absolute;
  left: -20px;
  top: 376px;
  width: 246px;
  height: 589px;
  border-radius: 7px;
  background: #101010;
  box-shadow: 0 0 8px rgba(0, 0, 0, 0.5);
`;
const NodeBox = styled.div`
  position: absolute;
  left: ${(p) => p.$x}px;
  top: ${(p) => p.$y}px;
  width: ${(p) => p.$w}px;
  height: ${(p) => p.$h}px;
  border-radius: 6px;
  background: #303030;
  font-size: 13px;
  color: #e0e0e0;
  box-shadow: ${(p) => (p.$sel ? "0 0 0 1.500px #e8e8e8, " : "")}0 2px 10px 3px rgba(0, 0, 0, 0.55);
`;
const NodeHead = styled.div`
  height: ${(p) => p.$h || 27}px;
  border-radius: 6px 6px 0 0;
  padding-left: 14px;
  padding-bottom: 1px;
  margin-bottom: ${(p) => (p.$mb === undefined ? 5 : p.$mb)}px;
  display: flex;
  align-items: center;
  gap: 8px;
  background: ${(p) => p.$bg || "#1d725e"};
  color: #eee;
`;
const Pin = styled.div`
  position: relative;
  height: 28.400px;
  display: flex;
  align-items: center;
  justify-content: ${(p) => (p.$out ? "flex-end" : "flex-start")};
  padding: 0 15px 0 13px;
  font-size: 12.900px;
`;
const SockSvg = styled.svg`
  position: absolute;
  ${(p) => (p.$out ? "right" : "left")}: -8px;
  top: 6px;
`;
const Sock = ({ k, out }) => {
  const c = { geo: "#14d6a3", vec: "#6c63c8", bool: "#cca6d6", float: "#a6a6a6", int: "#598c5c" }[k];
  return (
    <SockSvg width="16" height="16" viewBox="0 0 16 16" $out={out}>
      {(k === "geo" || k === "int") && <circle cx="8" cy="8" r="5.400" fill={c} stroke="#151515" strokeWidth=".8" />}
      {k === "vec" && <path d="M8 1.800 14.200 8 8 14.200 1.800 8z" fill={c} stroke="#151515" strokeWidth=".8" />}
      {(k === "bool" || k === "float") && (
        <g>
          <path d="M8 1.800 14.200 8 8 14.200 1.800 8z" fill={c} stroke="#151515" strokeWidth=".8" />
          <circle cx="8" cy="8" r="1.900" fill="#262626" />
        </g>
      )}
      {k === "none" && <circle cx="8" cy="8" r="5.800" fill="#262626" stroke="#7c7c7c" strokeWidth="1.800" />}
    </SockSvg>
  );
};
const NodeField = styled.div`
  width: 190px;
  height: 25px;
  display: flex;
  align-items: center;
  justify-content: space-between;
  border-radius: 4px;
  background: ${(p) => (p.$menu ? "#262626" : "#545454")};
  border: 1px solid ${(p) => (p.$menu ? "#3b3b3b" : "#4c4c4c")};
  padding: ${(p) => (p.$menu ? "0 2px 0 8px" : "0 16px 0 19px")};
  margin: ${(p) => (p.$menu ? "12px 0 5px 13px" : "0")};
`;
const NodeScrollY = styled.div`
  position: absolute;
  right: 1px;
  top: 17px;
  width: 8px;
  height: 1296px;
  border-radius: 4px;
  background: #2d2d2d;
`;
const NodeScrollX = styled.div`
  position: absolute;
  left: 583px;
  top: 1313px;
  width: 836px;
  height: 6px;
  border-radius: 3px;
  background: #313131;
`;
const Pointer = styled.svg`
  position: absolute;
  left: 708px;
  top: 700px;
`;

/* handles shorten when the two ends are nearly level */
const link = (x1, y1, x2, y2) => {
  const dx = x2 - x1;
  const slope = Math.abs((y2 - y1) / dx);
  const h = dx * 0.5 * Math.min(1, slope * 3.25);
  return `M${x1} ${y1}C${x1 + h} ${y1} ${x2 - h} ${y2} ${x2} ${y2}`;
};
const LINKS = [link(186, 460, 1225, 201), link(186, 460, 551, 639), "M-6 492H6"];

const Nodes = () => (
  <NodeEditor>
    <Bar $bg="#222222">
      <Group $ml={11}><Cell $w={52} $gap={4}><Icon n="geo" /><Chev /></Cell></Group>
      <Row>
        <Text $ml={20} $w={66}>View</Text>
        <Text $w={78}>Select</Text>
        <Text $w={59}>Add</Text>
        <Text $w={217}>Node</Text>
      </Row>
      <Group>
        <Cell $w={52} $gap={4}><Icon n="tree" /><Chev /></Cell>
        <Cell $w={198} $left $pl={10} $t="field" $sep><Text>Glade Scene</Text></Cell>
        <Cell $w={32} $t="grey" $c="#a8a8a8"><Icon n="shield" /></Cell>
        <Cell $w={34} $t="grey" $sep><Icon n="copy" /></Cell>
        <Cell $w={32} $t="grey" $sep><Icon n="close" /></Cell>
      </Group>
      <Cell $w={369} $left $pl={14} $c="#9c9c9c"><Icon n="pin" /></Cell>
      <Group><Cell $w={32} $t="mid" $c="#767676"><Icon n="up" /></Cell></Group>
      <Group $ml={9}>
        <Cell $w={31} $t="on"><Icon n="magnetOn" /></Cell>
        <Cell $w={52} $gap={4}><Icon n="snapGrid" /><Chev /></Cell>
      </Group>
      <Group $ml={10}>
        <Cell $w={31} $t="on"><Icon n="overlay" /></Cell>
        <Cell $w={33}><Chev /></Cell>
      </Group>
    </Bar>
    <Canvas>
      <Frame />
      <Links width="1431" height="1321">
        {LINKS.map((d) => <path key={d} d={d} fill="none" stroke="#0e0e0e" strokeWidth="5.500" opacity=".7" />)}
        {LINKS.map((d) => <path key={d + "c"} d={d} fill="none" stroke="#9fdcc8" strokeWidth="3.400" />)}
      </Links>
      <NodeBox $x={6.5} $y={415} $w={179} $h={182} $sel>
        <NodeHead $h={26}><Chev w={11} />Set Position</NodeHead>
        <Pin $out>Geometry<Sock k="geo" out /></Pin>
        <Spacer $h={3.5} />
        <Pin>Geometry<Sock k="geo" /></Pin>
        <Pin>Selection<Sock k="bool" /></Pin>
        <Pin>Position<Sock k="vec" /></Pin>
        <Pin>Offset<Sock k="vec" /></Pin>
      </NodeBox>
      <NodeBox $x={551} $y={467} $w={217} $h={276}>
        <NodeHead $h={26}><Chev w={11} />Distribute Points on Faces</NodeHead>
        <Pin $out>Points<Sock k="geo" out /></Pin>
        <Pin $out>Normal<Sock k="vec" out /></Pin>
        <Pin $out>Rotation<Sock k="vec" out /></Pin>
        <NodeField $menu>Random<Chev w={10} /></NodeField>
        <Pin>Mesh<Sock k="geo" /></Pin>
        <Pin>Selection<Sock k="bool" /></Pin>
        <Pin><NodeField><span>Density</span><span>10.000</span></NodeField><Sock k="float" /></Pin>
        <Pin><NodeField><span>Seed</span><span>0</span></NodeField><Sock k="int" /></Pin>
      </NodeBox>
      <NodeBox $x={1225} $y={156} $w={179} $h={94}>
        <NodeHead $bg="#1b1b1b" $h={27} $mb={4}><Chev w={11} />Group Output</NodeHead>
        <Pin>Geometry<Sock k="geo" /></Pin>
        <Pin><Sock k="none" /></Pin>
      </NodeBox>
      <Pointer width="80" height="100" viewBox="1443 784 80 100">
        <path d="M1454.500 799 1504.300 847.800 1483 849.300 1492 870 1482.300 875 1470.700 852.300 1454.300 867z" fill="#fff" stroke="#000" strokeWidth="7" paintOrder="stroke" />
      </Pointer>
      <Path>
        <Icon n="object" />
        <Text $ml={13} $w={130}>Ground.001</Text>
        <Caret w={9} />
        <Icon n="geo" ml={16} />
        <Text $ml={13} $w={168}>GeometryNodes</Text>
        <Caret w={9} />
        <Icon n="tree" ml={15} />
        <Text $ml={15}>Glade Scene</Text>
      </Path>
      <NodeScrollY />
      <NodeScrollX />
    </Canvas>
    <Edge $side="left" $y={62} $w={10}><Caret h={14} w={7} /></Edge>
    <Edge $side="right" $y={62}><Caret left h={14} w={8} /></Edge>
  </NodeEditor>
);

/* ---------- outliner ---------- */
const RightCol = styled.div`
  margin-left: 4px;
  width: 388px;
  display: flex;
  flex-direction: column;
  gap: 4px;
`;
const Outliner = styled.section`
  position: relative;
  height: 679px;
  border-radius: 7px;
  overflow: hidden;
  background: #282828;
`;
const TreeList = styled.div`
  padding-top: 3px;
`;
const TreeRow = styled.div`
  height: 33px;
  display: flex;
  align-items: center;
  background: ${(p) => (p.$odd ? "#2b2b2b" : "#282828")};
  padding-left: ${(p) => 4 + p.$lv * 33}px;
  padding-right: 18px;
  color: ${(p) => (p.$dim ? "#7f7f7f" : "#dcdcdc")};
`;
const TreeName = styled.span`
  line-height: 20px;
`;
const Tri = styled.div`
  width: 29px;
  display: flex;
  justify-content: center;
`;
const IconBox = styled.div`
  width: 33px;
  height: 29px;
  margin-top: -3px;
  margin-right: 6px;
  display: flex;
  align-items: center;
  justify-content: center;
  border-radius: 7px;
  background: ${(p) => (p.$hl ? "#4a4a4a" : "transparent")};
  box-shadow: ${(p) => (p.$hl ? "inset 0 0 0 1px #5c5c5c" : "none")};
`;
const Toggles = styled.div`
  margin-left: auto;
  margin-top: -4px;
  display: flex;
  align-items: center;
  gap: 10px;
  color: ${(p) => (p.$dim ? "#989898" : "#ececec")};
`;
const Guide = styled.div`
  position: absolute;
  left: ${(p) => p.$x}px;
  top: ${(p) => p.$y}px;
  width: ${(p) => p.$w}px;
  height: ${(p) => p.$h}px;
  background: ${(p) => p.$c};
`;

const TREE = [
  [0, "Scene Collection", "#e6e6e6", "", "root"],
  [1, "CAMERA", "#5d4385", "", "dim"],
  [1, "ASSETS", "#3f7390", "v", "dim"],
  [2, "Ground", "#8b8b8b", "", "dim"],
  [2, "Rocks", "#8b8b8b", "", "dim"],
  [2, "Trees", "#8b8b8b", "", "dim"],
  [2, "Plants", "#8b8b8b", "", "dim"],
  [2, "Bird Path", "#8b8b8b", "", "dim"],
  [2, "Birds", "#8b8b8b", "v", "dim"],
  [3, "Bird1", "#8b8b8b", "", "dim"],
  [3, "Bird2", "#8b8b8b", "", "dim"],
  [3, "Bird3", "#8b8b8b", "", "dim"],
  [2, "FX", "#8b8b8b", "v", "dim"],
  [3, "Lights", "#8b8b8b", "", "dim"],
  [3, "Billboards", "#8b8b8b", "", "dim"],
  [1, "SCENE", "#dc5a5a", "v", "scene"],
  [2, "Ground.001", "#c98549", ">", "obj"],
];

const OutlinerArea = () => (
  <Outliner>
    <Bar $bg="#2b2b2b">
      <Group $flat>
        <Cell $w={22} $left $gap={4}>
          <Svg width="2" height="14" viewBox="0 0 2 14"><path d="M0 0h2v3H0zM0 6h2v7H0z" fill="currentColor" /></Svg>
          <Chev />
        </Cell>
      </Group>
      <Group $ml={8}><Cell $w={52} $gap={5}><Icon n="layers" /><Chev /></Cell></Group>
      <Group $ml={26} $bg="#1d1d1d"><Cell $w={191} $left $pl={7}><Icon n="search" /></Cell></Group>
      <Group $ml={25}><Cell $w={52} $gap={11}><Icon n="funnel" /><Chev /></Cell></Group>
      <Group $ml={9}><Cell $w={8} $t="grey" /></Group>
    </Bar>
    <TreeList>
      {TREE.map(([lv, name, col, tri, kind], i) => (
        <TreeRow key={name} $odd={i % 2} $lv={lv} $dim={kind === "dim"}>
          <Tri>
            {tri && (
              <Svg width="11" height="11" viewBox="0 0 11 11" $c={kind === "dim" ? "#808080" : "#cfcfcf"} $ml={-5}>
                <path d={tri === "v" ? "M.5 .5h10l-5 10z" : "M.5 .5v10l10-5z"} fill="currentColor" />
              </Svg>
            )}
          </Tri>
          <IconBox $hl={kind === "root" || kind === "obj"}>
            <Icon n={kind === "obj" ? "meshObj" : "coll"} c={col} s={23} />
          </IconBox>
          <TreeName>{name}</TreeName>
          {kind !== "root" && (
            <Toggles $dim={kind === "dim"}>
              {kind !== "obj" && <Icon n={kind === "scene" ? "boxOn" : "box"} s={21} />}
              <Icon n="eye" s={22} ml={0} />
              <Icon n="camera" s={24} />
            </Toggles>
          )}
        </TreeRow>
      ))}
      <TreeRow $odd $lv={0} />
    </TreeList>
    <Guide $x={47} $y={149} $w={3} $h={380} $c="#3f6d94" />
    <Guide $x={81} $y={346} $w={1} $h={84} $c="#5a5a5a" />
    <Guide $x={81} $y={479} $w={1} $h={50} $c="#5a5a5a" />
    <Guide $x={47} $y={578} $w={2} $h={17} $c="#8a3f3f" />
    <FloatThumb $w={311} $h={5} $x={13} $y={671} $bg="#3c3c3c" />
  </Outliner>
);

/* ---------- properties ---------- */
const Props = styled.section`
  height: 679px;
  border-radius: 7px;
  overflow: hidden;
  background: #303030;
`;
const PropsBody = styled.div`
  display: flex;
  height: 639px;
`;
const Strip = styled.div`
  width: 46px;
  background: #1d1d1d;
  display: flex;
  flex-direction: column;
  align-items: flex-end;
  padding-top: 14px;
`;
const StripTab = styled.div`
  width: 44px;
  height: 44px;
  margin-bottom: ${(p) => p.$mb || 2}px;
  border-radius: 6px 0 0 6px;
  background: ${(p) => (p.$on ? "#303030" : "transparent")};
  color: ${(p) => p.$c};
  display: flex;
  align-items: center;
  justify-content: center;
`;
const Content = styled.div`
  padding: 18px 12px 0 13px;
  width: 342px;
`;
const Modifier = styled.div`
  margin-top: 17px;
  width: 318px;
  height: 183px;
  border: 1.500px solid #44659a;
  border-radius: 7px;
  background: #3c3c3c;
  padding-top: 5px;
`;
const Sub = styled.div`
  display: flex;
  align-items: center;
  gap: 9px;
  height: 41px;
  padding-left: 40px;
`;
const Dots = styled.div`
  margin-left: 26px;
  margin-top: -4px;
  display: grid;
  grid-template-columns: repeat(5, 2px);
  grid-auto-rows: 2px;
  gap: 3px 2.500px;
  i { background: #a0a0a0; }
`;

const STRIP = [
  ["tools", "#a8a8a8", 14], ["render", "#a8a8a8"], ["output", "#a8a8a8"], ["layers", "#a8a8a8"], ["scene", "#a8a8a8"],
  ["world", "#b34b57", 12], ["object", "#c08449"], ["wrench", "#7da2f2", 2, true], ["particles", "#6585c8"],
  ["physics", "#6585c8"], ["constraint", "#6585c8"], ["mesh", "#23b184"], ["material", "#b3586a"],
];

const Properties = () => (
  <Props>
    <Bar $bg="#303030" $h={40} $pt={4} $pb={5}>
      <Group $ml={14} $h={31}><Cell $w={49} $gap={4} $pl={2}><Icon n="props" /><Chev /></Cell></Group>
      <Group $ml={45} $h={31} $bg="#1d1d1d"><Cell $w={189} $left $pl={6}><Icon n="search" /></Cell></Group>
      <Group $ml={47} $h={31}><Cell $w={31}><Chev /></Cell></Group>
    </Bar>
    <PropsBody>
      <Strip>
        {STRIP.map(([n, c, mb, on]) => (
          <StripTab key={n} $c={c} $mb={mb} $on={on}><Icon n={n} /></StripTab>
        ))}
      </Strip>
      <Content>
        <Row>
          <Icon n="object" ml={4} />
          <Text $ml={14} $w={73}>Grou...</Text>
          <Caret w={9} />
          <Icon n="geo" ml={16} />
          <Text $ml={14} $w={113}>Geometr...</Text>
          <Icon n="pin" c="#a0a0a0" />
        </Row>
        <Spacer $h={31} />
        <Group $h={31} $ml={1}>
          <Cell $w={316} $left $pl={11}><Text $w={289}>Add Modifier</Text><Chev /></Cell>
        </Group>
        <Modifier>
          <Row>
            <Chev w={16} ml={11} c="#a0a0a0" />
            <Icon n="geo" ml={10} />
            <Group $h={31} $ml={17}>
              <Cell $w={30} $t="grey"><Icon n="mesh" s={23} /></Cell>
              <Cell $w={31} $t="on"><Icon n="edit" s={23} /></Cell>
              <Cell $w={32} $t="on" $sep><Icon n="monitor" s={23} /></Cell>
              <Cell $w={32} $t="on" $sep><Icon n="camera" s={23} /></Cell>
              <Cell $w={31}><Chev w={14} /></Cell>
            </Group>
            <Icon n="close" ml={6} />
            <Dots>{range(0, 9).map((i) => <i key={i} />)}</Dots>
          </Row>
          <Spacer $h={18} />
          <Group $h={31} $ml={13}>
            <Cell $w={51} $gap={4}><Icon n="tree" /><Chev /></Cell>
            <Cell $w={139} $left $pl={11} $t="field" $sep><Text>Glade Scene</Text></Cell>
            <Cell $w={33} $t="grey" $c="#a8a8a8"><Icon n="shield" s={23} /></Cell>
            <Cell $w={33} $t="grey" $sep><Icon n="copy" s={23} /></Cell>
            <Cell $w={33} $t="grey" $sep><Icon n="close" s={23} /></Cell>
          </Group>
          <Spacer $h={14} />
          <Sub><Caret c="#a0a0a0" h={15} />Output Attributes</Sub>
          <Sub><Caret c="#a0a0a0" h={15} />Internal Dependencies</Sub>
        </Modifier>
      </Content>
    </PropsBody>
  </Props>
);

/* ---------- page ---------- */
const Main = styled.main`
  display: flex;
  height: 1364px;
  flex: none;
`;
const Status = styled.footer`
  height: 33px;
  flex: none;
  background: #1d1d1d;
  color: #9a9a9a;
  display: flex;
  align-items: center;
  padding: 0 14px 0 16px;
`;
const Version = styled(Text)`
  margin-left: auto;
`;

export default function App() {
  return (
    <Page>
      <Global />
      <Top />
      <Main>
        <LeftCol>
          <ViewportArea />
          <Spreadsheet />
        </LeftCol>
        <Nodes />
        <RightCol>
          <OutlinerArea />
          <Properties />
        </RightCol>
      </Main>
      <Status>
        <Icon n="mouseL" /><Text $ml={15} $w={313}>Select</Text>
        <Icon n="mouseM" /><Text $ml={15} $w={313}>Pan View</Text>
        <Icon n="mouseR" /><Text $ml={15}>Node Context Menu</Text>
        <Version>3.3.0 Beta</Version>
      </Status>
    </Page>
  );
}
